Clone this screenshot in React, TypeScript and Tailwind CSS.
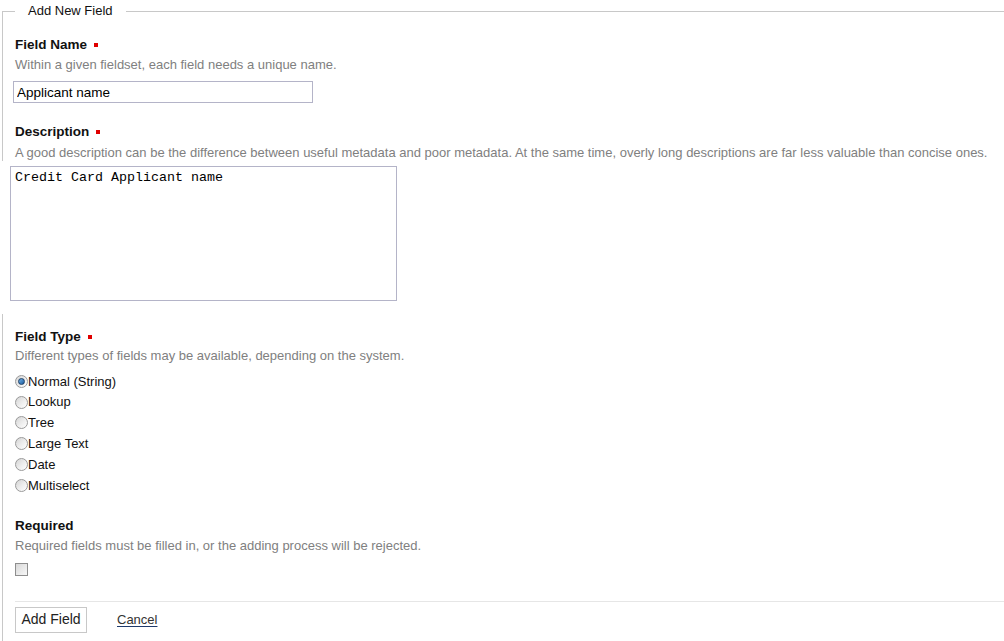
import React from "react";

const fieldTypes = ["Normal (String)", "Lookup", "Tree", "Large Text", "Date", "Multiselect"];

const Radio = ({ checked }: { checked: boolean }) => (
    <span className="flex items-center justify-center w-[13px] h-[13px] rounded-full border border-[#9a9a9a] bg-gradient-to-br from-[#d4d4d4] via-[#ececec] to-white shrink-0">
        {checked && <span className="w-[7px] h-[7px] rounded-full border border-[#1d3f66] bg-gradient-to-br from-[#6fb2e8] to-[#1a5c9e]" />}
    </span>
);

const Label = ({ text, required }: { text: string; required?: boolean }) => (
    <div className="flex items-center text-[13.5px] leading-[16px] font-bold text-[#111]">
        {text}
        {required && <span className="ml-[7px] w-[4px] h-[4px] bg-[#e00000]" />}
    </div>
);

const Help = ({ text }: { text: string }) => <div className="text-[13px] leading-[16px] text-[#808080]">{text}</div>;

const App = () => {
    const [fieldType, setFieldType] = React.useState("Normal (String)");
    const [formData, setFormData] = React.useState({
        name: "Applicant name",
        description: "Credit Card Applicant name",
        required: false
    });

    return (
        <div className="w-full min-h-[641px] bg-white overflow-hidden pt-[3px]" style={{ fontFamily: '"Liberation Sans", Arial, sans-serif' }}>
            <fieldset className="ml-[2px] w-[1040px] border-t border-l border-[#c8c8c8] pl-[12px] pt-[18px] pb-[10px]">
                <legend className="px-[13px] text-[13px] leading-[16px] text-[#111]">Add New Field</legend>

                <Label text="Field Name" required />
                <div className="mt-[4px]">
                    <Help text="Within a given fieldset, each field needs a unique name." />
                </div>
                <input
                    type="text"
                    value={formData.name}
                    onChange={(e) => setFormData({ ...formData, name: e.target.value })}
                    className="block mt-[8px] ml-[-2px] w-[300px] h-[22px] border border-[#b4b4c8] px-[3px] text-[13.5px] text-black outline-none"
                />

                <div className="mt-[21px]">
                    <Label text="Description" required />
                </div>
                <div className="mt-[5px]">
                    <Help text="A good description can be the difference between useful metadata and poor metadata. At the same time, overly long descriptions are far less valuable than concise ones." />
                </div>
                <div className="ml-[-13px] pl-[8px] pt-[5px] pb-[13px] bg-white relative">
                    <textarea
                        value={formData.description}
                        onChange={(e) => setFormData({ ...formData, description: e.target.value })}
                        className="block w-[387px] h-[135px] border border-[#b4b4c8] px-[4px] pt-[3px] pb-[2px] text-[13.33px] leading-[16px] text-black outline-none resize-none"
                        style={{ fontFamily: '"Liberation Mono", "Courier New", monospace' }}
                    />
                </div>

                <div className="mt-[15px]">
                    <Label text="Field Type" required />
                </div>
                <div className="mt-[3px]">
                    <Help text="Different types of fields may be available, depending on the system." />
                </div>
                <div className="mt-[7px] flex flex-col">
                    {fieldTypes.map((type) => (
                        <label key={type} className="flex items-center h-[20.8px] text-[13px] text-[#111] cursor-pointer" onClick={() => setFieldType(type)}>
                            <Radio checked={fieldType === type} />
                            <span>{type}</span>
                        </label>
                    ))}
                </div>

                <div className="mt-[22px]">
                    <Label text="Required" />
                </div>
                <div className="mt-[4px]">
                    <Help text="Required fields must be filled in, or the adding process will be rejected." />
                </div>
                <div
                    className="mt-[9px] w-[13px] h-[13px] border border-[#8e8e8e] bg-gradient-to-br from-[#d8d8d8] to-[#f8f8f8] cursor-pointer"
                    onClick={() => setFormData({ ...formData, required: !formData.required })}
                />

                <hr className="mt-[25px] border-t border-[#e6e6e6]" />

                <div className="flex items-center mt-[5px]">
                    <button className="h-[26px] w-[72px] border border-[#c8c8c8] bg-white text-[14px] text-[#222]">Add Field</button>
                    <a href="#" className="ml-[30px] text-[13px] text-[#333] underline decoration-[#1f3a6b] underline-offset-2">
                        Cancel
                    </a>
                </div>
            </fieldset>
        </div>
    );
};

export default App;
